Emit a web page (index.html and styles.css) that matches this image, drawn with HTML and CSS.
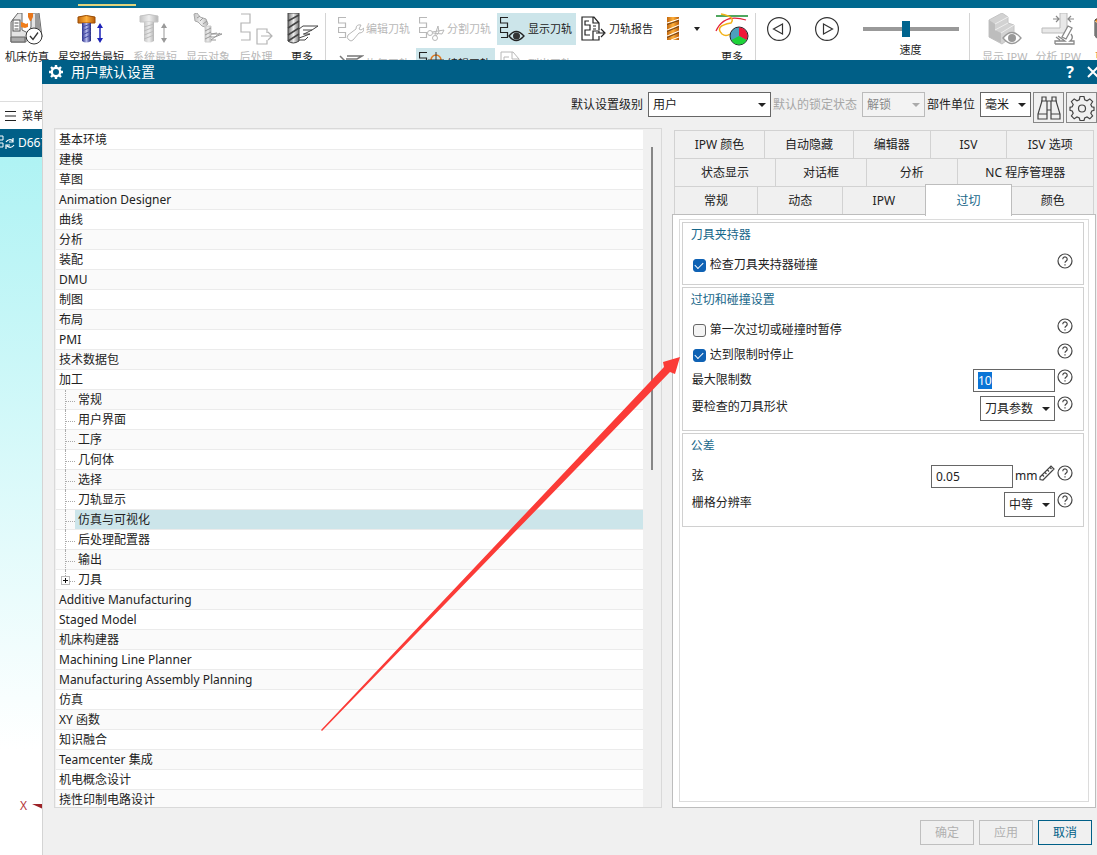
FILE: index.html
```html
<!DOCTYPE html>
<html lang="zh-CN">
<head>
<meta charset="utf-8">
<title>用户默认设置</title>
<link rel="stylesheet" href="styles.css">
</head>
<body>
<svg class="defs" aria-hidden="true">
  <defs>
    <linearGradient id="steel" x1="0" x2="1"><stop offset="0" stop-color="#777"/><stop offset=".5" stop-color="#eee"/><stop offset="1" stop-color="#777"/></linearGradient>
    <linearGradient id="pale" x1="0" x2="1"><stop offset="0" stop-color="#c4c4c4"/><stop offset=".5" stop-color="#eee"/><stop offset="1" stop-color="#b5b5b5"/></linearGradient>
    <linearGradient id="gold" x1="0" x2="1"><stop offset="0" stop-color="#c4680c"/><stop offset=".5" stop-color="#ffb13c"/><stop offset="1" stop-color="#b85a05"/></linearGradient>
    <linearGradient id="blue" x1="0" x2="1"><stop offset="0" stop-color="#2a2f8a"/><stop offset=".5" stop-color="#b3b8ea"/><stop offset="1" stop-color="#20257c"/></linearGradient>
    <symbol id="help" viewBox="0 0 16 16"><circle cx="8" cy="8" r="7" fill="none" stroke="#444" stroke-width="1.2"/><path d="M5.8 6.2a2.2 2.2 0 1 1 3.4 1.8C8.300 8.600 8 9 8 9.800M8 11.300v1.200" fill="none" stroke="#444" stroke-width="1.200"/></symbol>
    <symbol id="track" viewBox="0 0 10 22"><path d="M8 .500H.500V6H7.500V10.500H.500V15.500H7.500V20.500H1" fill="none" stroke="currentColor" stroke-width="1.200"/></symbol>
  </defs>
</svg>

<div class="app">
  <header class="topbar"><span class="topbar-mark"></span></header>
  <div class="ribbon">
    <div class="group tools">
      <button class="big"><svg width="34" height="34" viewBox="0 0 34 34"><path d="M4 5l4-5h4v17l6 3 3-6V0h8l3 24H16v5H1V9z" fill="#e4e4e4" stroke="#666"/><path d="M1 24h14v5H1z" fill="#aaa" stroke="#666"/><path d="M25 1l4 0 2 20h-6z" fill="#999"/><rect x="3" y="7" width="7" height="11" fill="#fff" stroke="#555"/><path d="M4.500 10h4M4.500 13h4M4.500 16h4" stroke="#555"/><path d="M18 0h5v4l-2 4h-1l-2-4z" fill="#e8761a"/><path d="M11 9l3 1 2 1 2-1v4l-3 1-4-1z" fill="#f07d1a"/><circle cx="24" cy="23" r="8" fill="#fff" stroke="#333"/><path d="M20 23l3 3.500 5-7" fill="none" stroke="#333" stroke-width="1.300"/></svg><span>机床仿真</span></button>
      <button class="big"><svg width="34" height="34" viewBox="0 0 34 34"><path d="M4 4q8-3 17 0v6H4z" fill="url(#gold)" stroke="#9a4c04"/><path d="M8 10h9v18q-5 3-9 0z" fill="url(#blue)"/><path d="M8 14l9-3M8 18l9-4M8 22l9-4M8 26l9-4" stroke="#444ba8"/><path d="M26 13v15" stroke="#1d22b8" stroke-width="1.500"/><path d="M26 10l3 5h-6zM26 30l3-5h-6z" fill="#1d22b8"/></svg><span>星空报告最短</span></button>
      <button class="big" disabled><svg width="34" height="34" viewBox="0 0 34 34"><path d="M2 3q9-3 18 0v6H2z" fill="url(#pale)" stroke="#c4c4c4"/><path d="M6 9h10v19q-5 3-10 0z" fill="url(#pale)"/><path d="M6 14l10-3M6 18l10-4M6 22l10-4M6 26l10-4" stroke="#bbb"/><path d="M26 12v16" stroke="#999"/><path d="M26 10l3 5h-6zM26 30l3-5h-6z" fill="#999"/></svg><span>系统最短</span></button>
      <button class="big" disabled><svg width="34" height="34" viewBox="0 0 34 34"><path d="M3 1l3-1 3 4 6 2 2 5-3 3-3-1-4-4-3-1z" fill="url(#pale)" stroke="#aaa"/><path d="M6 5l3-2M9 8l3-3M12 11l4-3" stroke="#999"/><path d="M14 13h6v16h-6z" fill="url(#pale)" stroke="#ccc"/><path d="M14 18l6-3M14 22l6-3M14 26l6-3M20 21h11l-7 3h-4M20 21l6-1M29 20l-9 7M20 27h5" fill="none" stroke="#999"/></svg><span>显示对象</span></button>
      <button class="big" disabled><svg width="34" height="34" viewBox="0 0 34 34"><path d="M2 1h9v9H2v9h9v8H2M28 20v-4H18v15h10v-4M22 23h11M29 19l4 4-4 4" fill="none" stroke="#b4b4b4" stroke-width="1.200"/></svg><span>后处理</span></button>
      <button class="big last"><svg width="34" height="34" viewBox="0 0 34 34"><path d="M3 0h11v28q-6 4-11 0z" fill="url(#steel)" stroke="#444"/><path d="M3 8l11-6M3 15l11-7M3 22l11-7M3 28l11-7" stroke="#444" stroke-width="1.500"/><path d="M14 16l4-3h15l-6 4h-9M27 17l-8 4M14 25l11-4h-7M14 27h6l3-3" fill="none" stroke="#444"/></svg><span>更多</span></button>
    </div>
    <div class="group paths">
      <button class="small" disabled><svg width="26" height="26" viewBox="0 0 26 26"><use href="#track" x="0" y="1" width="10" height="22"/><path d="M11 24q-3-2-1-5l8-6q0-5 5-4l-2 4 2 1 3-2q0 5-5 5l-6 7q-2 2-4 0z" fill="#fff" stroke="currentColor"/></svg>编辑刀轨</button>
      <button class="small" disabled><svg width="26" height="26" viewBox="0 0 26 26"><use href="#track" x="0" y="1" width="10" height="22"/><path d="M13 16l12-2-2 4-9-1M16 19l3-9 1 6-3 4" fill="none" stroke="currentColor"/><circle cx="11" cy="17" r="2.500" fill="#fff" stroke="currentColor"/><circle cx="16" cy="22" r="2.500" fill="#fff" stroke="currentColor"/></svg>分割刀轨</button>
      <button class="small on"><svg width="26" height="26" viewBox="0 0 26 26"><use href="#track" x="0" y="1" width="10" height="22"/><path d="M9 20q7-9 15 0-8 9-15 0z" fill="#cce5ea" stroke="currentColor" stroke-width="1.300"/><circle cx="16.500" cy="20" r="3.500" fill="#333"/></svg>显示刀轨</button>
      <button class="small"><svg width="26" height="26" viewBox="0 0 26 26"><path d="M12 24H1V1h12l5 6v7M12 1v6h6M8 5H4v4h5v5H4v5h5M12 10h3M12 13h3M18 20v4h-6v-9h6v2M15 17h8M20 13l4 4-4 4" fill="none" stroke="currentColor" stroke-width="1.200"/></svg>刀轨报告</button>
      <button class="small" disabled><svg width="26" height="26" viewBox="0 0 26 26"><path d="M2 5l9 9M3 10l8 2M9 5h15l-5 3H8M8 10h12" fill="none" stroke="#777" stroke-width="1.500"/></svg>恢复刀轨</button>
      <button class="small on"><svg width="26" height="26" viewBox="0 0 26 26"><use href="#track" x="0" y="1" width="10" height="22"/><circle cx="17" cy="9" r="5" fill="none" stroke="#e07a20" stroke-width="1.500"/><path d="M17 1v15M9 9h16" stroke="#333"/></svg>编辑刀轨</button>
      <button class="small" disabled><svg width="26" height="26" viewBox="0 0 26 26"><path d="M1 23V1h12l6 7v15zM12 1v7h7M9 6H4v4h5v4" fill="none" stroke="currentColor"/></svg>列出刀轨</button>
    </div>
    <div class="group view">
      <button class="drill" aria-label="刀具"><svg width="14" height="26" viewBox="0 0 14 26"><path d="M1 1h12v23H1z" fill="url(#gold)"/><path d="M1 7l12-4M1 14l12-5M1 20l12-5M5 24l8-3" stroke="#fff"/><path d="M1 8.500l12-4M1 15.500l12-5M1 21.500l12-5" stroke="#684020"/></svg><i class="caret"></i></button>
      <button class="big"><svg width="34" height="34" viewBox="0 0 34 34"><path d="M1 3h32" stroke="#168a2a" stroke-width="1.500"/><path d="M1 18Q9 0 31 7" fill="none" stroke="#e3203c" stroke-width="1.300"/><path d="M6 1q15 3 10 9-17 3-9 11 4 3 8 0" fill="none" stroke="#f2b21a" stroke-width="1.500"/><circle cx="24" cy="23" r="9" fill="#4d9fbd" stroke="#222"/><path d="M24 23v-8.500a8.500 8.500 0 0 1 7.500 12.500z" fill="#f01838"/><path d="M24 23l7.500 4a8.500 8.500 0 0 1-15 0z" fill="#1ed338"/></svg><span>更多</span></button>
    </div>
    <div class="group play">
      <button aria-label="后退"><svg width="24" height="24" viewBox="0 0 24 24"><circle cx="12" cy="12" r="11.400"/><path d="M15.500 7v10L6.500 12z"/></svg></button>
      <button aria-label="播放"><svg width="24" height="24" viewBox="0 0 24 24"><circle cx="12" cy="12" r="11.400"/><path d="M8.500 7v10l9-5z"/></svg></button>
      <button aria-label="上一步"><svg width="24" height="24" viewBox="0 0 24 24"><circle cx="12" cy="12" r="11.400"/><path d="M8 6v11M16 6l-7 6 7 5z"/></svg></button>
      <button aria-label="下一步"><svg width="24" height="24" viewBox="0 0 24 24"><circle cx="12" cy="12" r="11.400"/><path d="M16 6v11M8 6l7 6-7 5z"/></svg></button>
    </div>
    <div class="speed"><input type="range" id="speed" min="0" max="100" value="44"><label for="speed">速度</label></div>
    <div class="group ipw">
      <button class="big" disabled><svg width="34" height="34" viewBox="0 0 34 34"><path d="M1 7L14 0l6 4v6l6 2v10l-12 9L1 24z" fill="#d2d2d2" stroke="#c4c4c4"/><path d="M1 7l6 4v6l6 3v10L1 24z" fill="#bdbdbd"/><path d="M7 11l13-7M7 17l13-7M13 20l13-8" stroke="#eee"/><path d="M15 25q9-11 18 0-9 11-18 0z" fill="#fff" stroke="#999" stroke-width="1.300"/><circle cx="24" cy="25" r="4" fill="#999"/></svg><span>显示 IPW</span></button>
      <button class="big" disabled><svg width="34" height="34" viewBox="0 0 34 34"><path d="M1 15h18V0h7v20H1z" fill="#e8e8e8" stroke="#bbb"/><path d="M12 6h6M15 3l3 3-3 3M33 6h-6M30 3l-3 3 3 3" fill="none" stroke="#888" stroke-width="1.200"/><path d="M27 13l4 2-6 11-4-2zM14 31h19v-3h-4q4-3 1-7M14 31v-3h10l-7-5M15 24l4 3" fill="#fff" stroke="#888" stroke-width="1.300"/></svg><span>分析 IPW</span></button>
      <button class="big"><svg width="34" height="34" viewBox="0 0 34 34"><path d="M6 7l9-6 14 6v16l-14 7-9-7z" fill="#f08a1d" stroke="#333"/><path d="M6 8l7 5v16l-7-5z" fill="#777"/><path d="M6 8l7 5 14-6" fill="none" stroke="#ffd193"/></svg><span class="warm">更多</span></button>
    </div>
  </div>
  <div class="menubar"><button><svg width="11" height="10" viewBox="0 0 11 10"><path d="M0 .500h11M0 5h11M0 9.500h11" stroke="#222"/></svg>菜单</button></div>
  <div class="filetab"><svg width="16" height="18" viewBox="0 0 16 18"><path d="M0 2h3v4H0M0 9h3v4H0" fill="none" stroke="#fff"/><path d="M6 8q3-4 7-1M13 4v4H9M14 11q-3 4-7 1M6 15v-4h4" fill="none" stroke="#fff" stroke-width="1.200"/></svg>D667</div>
  <div class="viewport"><span class="axis">X<svg width="11" height="7" viewBox="0 0 11 7"><path d="M0 1h11v5z" fill="#9c2226"/></svg></span></div>
</div>

<section class="dialog" role="dialog" aria-labelledby="dlg-title">
  <div class="titlebar">
    <svg width="16" height="16" viewBox="0 0 16 16"><circle cx="8" cy="8" r="4.200" fill="none" stroke="#fff" stroke-width="2.400"/><path d="M8 1v2.500M8 12.500v2.500M1 8h2.500M12.500 8h2.500M3 3l2 2M11 11l2 2M13 3l-2 2M5 11l-2 2" stroke="#fff" stroke-width="2.400"/></svg>
    <h1 id="dlg-title">用户默认设置</h1>
    <button class="t-help" aria-label="帮助">?</button>
    <button aria-label="关闭"><svg width="12" height="12" viewBox="0 0 12 12"><path d="M1 1l10 10M11 1L1 11" stroke="#fff" stroke-width="2"/></svg></button>
  </div>

  <div class="toolbar">
    <label for="level">默认设置级别</label>
    <span class="pick wide"><select id="level"><option>用户</option></select></span>
    <label for="lock" class="off">默认的锁定状态</label>
    <span class="pick mid off"><select id="lock" disabled><option>解锁</option></select></span>
    <label for="unit">部件单位</label>
    <span class="pick short"><select id="unit"><option>毫米</option></select></span>
    <button class="tool" aria-label="查找"><svg width="26" height="26" viewBox="0 0 26 26"><path d="M5 6h5v-4h-4v4L2 19v5h9v-5H2M21 6h-5v-4h4v4l4 13v5h-9v-5h9M10 5v1h6M11 19V6M15 19V6M11 15h4" fill="none" stroke="#444" stroke-width="1.200"/></svg></button>
    <button class="tool" aria-label="管理"><svg width="26" height="26" viewBox="0 0 26 26"><path d="M11 1.500h4l.7 3.200 2.300 1 2.800-1.800 2.800 2.800-1.800 2.800 1 2.300 2.200.5v3l-2.200.6-1 2.300 1.800 2.800-2.800 2.800-2.800-1.800-2.300 1-.7 2.500h-4l-.7-2.500-2.300-1-2.800 1.800-2.800-2.800 1.800-2.800-1-2.300-2.200-.6v-3l2.200-.5 1-2.300-1.800-2.800 2.800-2.800 2.800 1.800 2.300-1z" fill="none" stroke="#444" stroke-width="1.200"/><circle cx="13" cy="13.500" r="3.500" fill="none" stroke="#444" stroke-width="1.200"/></svg></button>
  </div>

  <div class="main">
    <div class="list">
      <ul class="tree">
        <li>基本环境</li><li>建模</li><li>草图</li><li>Animation Designer</li><li>曲线</li><li>分析</li><li>装配</li><li>DMU</li><li>制图</li><li>布局</li><li>PMI</li><li>技术数据包</li><li>加工</li>
        <li class="sub">常规</li><li class="sub">用户界面</li><li class="sub">工序</li><li class="sub">几何体</li><li class="sub">选择</li><li class="sub">刀轨显示</li><li class="sub current"><span>仿真与可视化</span></li><li class="sub">后处理配置器</li><li class="sub">输出</li><li class="sub end"><button class="expand" aria-label="展开"></button>刀具</li>
        <li>Additive Manufacturing</li><li>Staged Model</li><li>机床构建器</li><li>Machining Line Planner</li><li>Manufacturing Assembly Planning</li><li>仿真</li><li>XY 函数</li><li>知识融合</li><li>Teamcenter 集成</li><li>机电概念设计</li><li>挠性印制电路设计</li>
      </ul>
      <div class="scroll"><div class="thumb"></div></div>
    </div>

    <div class="side">
      <div class="tabs" role="tablist">
        <div class="tabrow r1"><button role="tab">IPW 颜色</button><button role="tab">自动隐藏</button><button role="tab">编辑器</button><button role="tab">ISV</button><button role="tab">ISV 选项</button></div>
        <div class="tabrow r2"><button role="tab">状态显示</button><button role="tab">对话框</button><button role="tab">分析</button><button role="tab">NC 程序管理器</button></div>
        <div class="tabrow r3"><button role="tab">常规</button><button role="tab">动态</button><button role="tab">IPW</button><button role="tab" class="active" aria-selected="true">过切</button><button role="tab">颜色</button></div>
      </div>
      <div class="panel"><div class="page">
        <section class="box tight">
          <h2>刀具夹持器</h2>
          <div class="row"><label class="check"><input type="checkbox" checked>检查刀具夹持器碰撞</label><button class="q" aria-label="帮助"><svg><use href="#help"/></svg></button></div>
        </section>
        <section class="box">
          <h2>过切和碰撞设置</h2>
          <div class="row"><label class="check"><input type="checkbox">第一次过切或碰撞时暂停</label><button class="q" aria-label="帮助"><svg><use href="#help"/></svg></button></div>
          <div class="row"><label class="check"><input type="checkbox" checked>达到限制时停止</label><button class="q" aria-label="帮助"><svg><use href="#help"/></svg></button></div>
          <div class="row field"><label for="max">最大限制数</label><input type="text" id="max" value="10"><button class="q" aria-label="帮助"><svg><use href="#help"/></svg></button></div>
          <div class="row field"><label for="shape">要检查的刀具形状</label><span class="pick shape"><select id="shape"><option>刀具参数</option></select></span><button class="q" aria-label="帮助"><svg><use href="#help"/></svg></button></div>
        </section>
        <section class="box">
          <h2>公差</h2>
          <div class="row field"><label for="chord">弦</label><input type="text" id="chord" value="0.05"><span class="unit">mm</span><button class="q" aria-label="测量"><svg viewBox="0 0 16 16"><path d="M1 12L12 1l3 3L4 15l-3-.5zM6 7.500l1.500 1.500M8.500 5l1.500 1.500M11 2.500L12.500 4M3.500 10L5 11.500" fill="none" stroke="#444" stroke-width="1.200"/></svg></button><button class="q" aria-label="帮助"><svg><use href="#help"/></svg></button></div>
          <div class="row field"><label for="grid">栅格分辨率</label><span class="pick short"><select id="grid"><option>中等</option></select></span><button class="q" aria-label="帮助"><svg><use href="#help"/></svg></button></div>
        </section>
      </div></div>
    </div>
  </div>

  <div class="footer"><button disabled>确定</button><button disabled>应用</button><button class="primary">取消</button></div>
</section>

<svg class="pointer" width="360" height="375" viewBox="0 0 360 375" aria-hidden="true"><path d="M0 373L343 10l-1-5 17-5-5 17-5-2L1 374z" fill="#fb3b37"/></svg>
<script src="main.js"></script>
</body>
</html>
```
FILE: styles.css
```css
* { box-sizing: border-box; }
body {
  margin: 0;
  height: 100vh;
  position: relative;
  overflow: hidden;
  background: #fff;
  color: #222;
  font: 12px/18px "Noto Sans", "Noto Sans CJK SC", sans-serif;
}
button, input, select { font: inherit; color: inherit; margin: 0; }
button { padding: 0; border: 0; background: none; white-space: nowrap; }
h1, h2, ul { margin: 0; padding: 0; font-weight: normal; }
svg { display: block; flex: none; }
.defs { position: absolute; width: 0; height: 0; }

/* application behind the dialog */
.app { height: 100%; display: flex; flex-direction: column; font-size: 11px; line-height: 16px; }
.topbar { flex: none; height: 8px; padding: 4px 78px 0; background: #00698f; }
.topbar-mark { display: block; width: 58px; height: 2px; background: #e0d47c; }
.ribbon { flex: none; display: flex; height: 94px; padding-top: 5px; border-bottom: 1px solid #ddd; overflow: hidden; }
.group { display: flex; align-items: flex-start; flex: none; border-right: 1px solid #d4d4d4; }
.big { display: flex; flex-direction: column; align-items: center; gap: 2px; flex: none; }
.big:disabled, .small:disabled { color: #b8b8b8; }
.warm { color: #e0751a; }
.tools { gap: 9px; padding: 0 6px 0 5px; }
.tools .last { margin-left: 3px; }
.paths { display: grid; grid-template-columns: repeat(4, 79px); grid-auto-rows: 32px; gap: 3px 2px; padding-left: 9px; border: 0; align-items: stretch; }
.small { display: flex; align-items: center; gap: 2px; padding-left: 3px; }
.on { background: #cce5ea; }
.view { padding: 0 6px 0 9px; gap: 15px; }
.drill { display: flex; align-items: center; gap: 14px; height: 32px; }
.caret { border: 3px solid transparent; border-top: 4px solid #222; border-bottom: 0; }
.play { display: grid; grid-template-columns: 24px 24px; gap: 11px 24px; padding: 4px 23px 0 11px; border: 0; }
.play path, .play circle { fill: none; stroke: #333; stroke-width: 1.2; }
.speed { flex: none; width: 108px; padding: 8px 11px 0 1px; border-right: 1px solid #d4d4d4; text-align: center; }
.speed input { display: block; width: 96px; height: 16px; margin-bottom: 5px; appearance: none; background: linear-gradient(#999, #999) center / 100% 4px no-repeat; }
.speed input::-webkit-slider-thumb { appearance: none; width: 8px; height: 16px; background: #00648e; }
.ipw { gap: 8px; padding-left: 12px; border: 0; }
.menubar { flex: none; height: 27px; padding: 6px 5px; }
.menubar button { display: flex; align-items: center; gap: 6px; }
.filetab { flex: none; display: flex; align-items: center; gap: 2px; height: 28px; background: #005f87; color: #fff; font-size: 12px; width: 60px; }
.viewport { flex: 1; display: flex; align-items: flex-end; padding: 0 0 42px 20px; background: linear-gradient(#aff3f4, #fff 85%); }
.axis { display: flex; align-items: center; gap: 5px; color: #b5373b; font-size: 12px; line-height: 14px; }

/* dialog window */
.dialog {
  position: absolute;
  inset: 60px 0 0 42px;
  display: flex;
  flex-direction: column;
  background: #f0f0f0;
  border-left: 1px solid #d4d4d4;
}
.titlebar { flex: none; display: flex; align-items: center; gap: 7px; height: 24px; margin-left: -1px; padding-left: 6px; background: #005f87; color: #fff; }
.titlebar h1 { flex: 1; font-size: 14px; line-height: 24px; }
.t-help { font-size: 16px; font-weight: bold; margin-right: 6px; }
.titlebar button:last-child { margin-right: -2px; }

.toolbar { flex: none; display: flex; align-items: flex-start; justify-content: flex-end; gap: 2px; height: 44px; padding-top: 8px; }
.toolbar label { padding: 4px 3px 0 0; }
label.off { color: #a6a6a6; }
.pick { position: relative; flex: none; height: 25px; }
.pick::after { content: ""; position: absolute; right: 5px; top: 11px; border: 4px solid transparent; border-top-color: #222; border-bottom: 0; pointer-events: none; }
.pick select { appearance: none; display: block; width: 100%; height: 100%; padding: 0 4px; border: 1px solid #666; border-radius: 0; background: #fff; }
.pick.off select { border-color: #bbb; background: #f3f3f3; color: #888; opacity: 1; }
.pick.off::after { border-top-color: #aaa; }
.wide { width: 123px; }
.mid { width: 63px; }
.short { width: 51px; }
.shape { width: 75px; }
.tool { flex: none; display: grid; place-items: center; width: 31px; height: 31px; border: 1px solid #888; }

.main { flex: 1; min-height: 0; display: flex; gap: 10px; padding: 0 1px 0 11px; }
.list { flex: 606 1 0; min-width: 0; display: flex; overflow: hidden; padding: 1px 1px 0 1px; border: 1px solid #d9d9d9; }
.tree { flex: 1; list-style: none; background: #fff; }
.tree li { position: relative; height: 20px; padding: 0 3px; line-height: 19px; border-bottom: 1px solid #ebebeb; white-space: nowrap; }
.tree li:nth-child(even) { background: #fafafa; }
.tree .sub { padding-left: 22px; }
.sub::before { content: ""; position: absolute; left: 9px; top: 0; width: 9px; height: 11px; border: 1px dotted #aaa; border-width: 0 0 1px 1px; }
.sub::after { content: ""; position: absolute; left: 9px; top: 11px; height: 9px; border-left: 1px dotted #aaa; }
.sub.end::after { content: none; }
.tree .sub.current { padding: 0 0 0 19px; }
.current span { display: block; padding-left: 3px; background: #cce5ea; }
.expand { position: absolute; z-index: 1; left: 5px; top: 6px; width: 9px; height: 9px; border: 1px solid #bbb; background: linear-gradient(#111, #111) center / 5px 1px no-repeat, linear-gradient(#111, #111) center / 1px 5px no-repeat, #fff; }
.scroll { flex: none; width: 17px; padding: 17px 7px 0 8px; background: #f0f0f0; }
.thumb { height: 49%; background: #868686; }

.side { flex: 426 1 0; min-width: 0; display: flex; flex-direction: column; }
.tabs { flex: none; padding: 2px 2px 0; }
.tabrow { display: grid; height: 28px; }
.r1 { grid-template-columns: 92fr 89fr 77fr 77fr 87fr; }
.r2 { grid-template-columns: 103fr 91fr 91fr 137fr; }
.r3 { grid-template-columns: 85fr 85fr 83fr 87fr 82fr; }
.tabrow button { border: 1px solid #d2d2d2; border-width: 1px 1px 0 0; }
.tabrow button:first-child { border-left-width: 1px; }
.tabrow .active { position: relative; margin: -2px 0 -2px -1px; border: 1px solid #bdbdbd; border-bottom: 0; background: #fff; color: #17678a; }
.panel { flex: 1; padding: 4px 6px 5px; border: 1px solid #bdbdbd; background: #fff; }
.page { height: 100%; display: flex; flex-direction: column; gap: 2px; padding: 2px 4px 2px 2px; border: 1px solid #dcdcdc; }
.box { padding: 2px 10px 8px 8px; border: 1px solid #d0d0d0; }
.tight { padding-bottom: 6px; }
.box h2 { margin-bottom: 8px; font-size: 12px; line-height: 20px; color: #17678a; }
.row { display: flex; align-items: flex-start; gap: 2px; height: 25px; }
.field { height: 27px; padding-top: 1px; }
.row label { flex: 1; padding: 2px 0 0 1px; }
.row .check { display: flex; align-items: center; gap: 4px; padding: 3px 0 0 2px; }
.check input { appearance: none; display: grid; place-items: center; width: 13px; height: 13px; border: 1px solid #666; border-radius: 3px; background: #f4f4f4; }
.check input:checked { border-color: #0f62b4; background: #0f62b4; }
.check input:checked::before { content: ""; width: 7px; height: 4px; margin-bottom: 2px; border: 1px solid #fff; border-width: 0 0 1px 1px; transform: rotate(-45deg); }
.row input[type="text"] { width: 82px; height: 23px; padding: 0 4px; border: 1px solid #666; background: #fff; outline: 0; }
.row input::selection { background: #0a74d6; color: #fff; }
.unit { padding-top: 2px; width: 22px; }
.q, .q svg { width: 16px; height: 16px; }

.footer { flex: none; display: flex; justify-content: flex-end; gap: 5px; padding: 12px 5px 10px; }
.footer button { width: 54px; height: 25px; border: 1px solid #bfbfbf; }
.footer button:disabled { color: #b0b0b0; }
.footer .primary { border-color: #005f87; color: #005f87; }

.pointer { position: absolute; left: 321px; top: 357px; pointer-events: none; }
```
FILE: main.js
```js
const max = document.getElementById("max");
max.focus();
max.select();
```
